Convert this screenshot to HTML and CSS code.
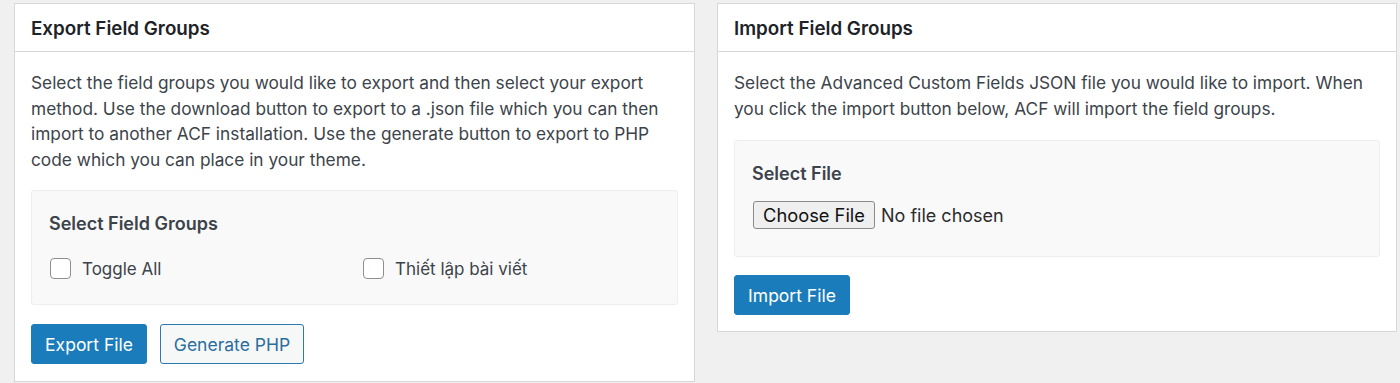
FILE: index.html
```html
<!DOCTYPE html>
<html lang="en">
<head>
<meta charset="utf-8">
<title>Tools</title>
<link rel="stylesheet" href="styles.css">
</head>
<body>
<div class="wrap">
  <section class="postbox export">
    <h2 class="hndle">Export Field Groups</h2>
    <div class="inside">
      <p class="desc">Select the field groups you would like to export and then select your export method. Use the download button to export to a .json file which you can then import to another ACF installation. Use the generate button to export to PHP code which you can place in your theme.</p>
      <div class="field">
        <div class="label">Select Field Groups</div>
        <ul class="checks">
          <li><label><input type="checkbox" class="cb"><span>Toggle All</span></label></li>
          <li><label><input type="checkbox" class="cb"><span>Thiết lập bài viết</span></label></li>
        </ul>
      </div>
      <div class="actions">
        <button class="btn primary">Export File</button>
        <button class="btn secondary">Generate PHP</button>
      </div>
    </div>
  </section>
  <section class="postbox import">
    <h2 class="hndle">Import Field Groups</h2>
    <div class="inside">
      <p class="desc">Select the Advanced Custom Fields JSON file you would like to import. When you click the import button below, ACF will import the field groups.</p>
      <div class="field file-field">
        <div class="label">Select File</div>
        <div class="file-row">
          <button class="choose">Choose File</button>
          <span class="nofile">No file chosen</span>
        </div>
      </div>
      <div class="actions">
        <button class="btn primary">Import File</button>
      </div>
    </div>
  </section>
</div>
</body>
</html>
```

FILE: styles.css
```css
html, body {
  margin: 0;
  padding: 0;
  background: #f0f0f1;
  font-family: Inter, "Liberation Sans", Arial, sans-serif;
  color: #3c434a;
}

.wrap {
  display: flex;
  align-items: flex-start;
  gap: 22px;
  padding: 3px 0 0 14px;
}

.postbox {
  background: #fff;
  border: 1px solid #d6d7d9;
  box-sizing: border-box;
}

.export { width: 681px; }
.import { width: 680px; }

.hndle {
  margin: 0;
  height: 48px;
  box-sizing: border-box;
  padding: 1px 16px 0 16px;
  display: flex;
  align-items: center;
  font-size: 18.8px;
  font-weight: 600;
  color: #1d2327;
  border-bottom: 1px solid #d6d7d9;
}

.inside {
  padding: 18px 16px 17px 16px;
}

.import .inside {
  padding-bottom: 16px;
}

.desc {
  margin: 0;
  font-size: 17.3px;
  line-height: 25.6px;
  color: #3c434a;
}

.field {
  margin-top: 18px;
  background: #f9f9f9;
  border: 1px solid #eeeeee;
  border-radius: 3px;
  padding: 22px 17px 0 17px;
  box-sizing: border-box;
}

.export .field { height: 115px; }
.file-field { height: 117px; margin-top: 19px; padding-top: 22px; }

.label {
  font-size: 18px;
  font-weight: 600;
  color: #3c434a;
  line-height: 22px;
}

.checks {
  list-style: none;
  margin: 23px 0 0 0;
  padding: 0;
  display: grid;
  grid-template-columns: 313px 1fr;
}

.checks label {
  display: flex;
  align-items: center;
  gap: 11px;
  font-size: 17px;
  color: #3c434a;
}

.cb {
  appearance: none;
  -webkit-appearance: none;
  margin: 0 0 0 1px;
  width: 21px;
  height: 21px;
  border: 1.5px solid #8c8f94;
  border-radius: 4px;
  background: #fff;
  box-sizing: border-box;
  flex: none;
}

.file-row {
  margin-top: 16px;
  display: flex;
  align-items: center;
  gap: 6px;
}

.choose {
  margin-left: 1px;
  height: 28px;
  width: 122px;
  padding: 0;
  font-family: Inter, "Liberation Sans", Arial, sans-serif;
  font-size: 18.3px;
  color: #111;
  background: #efefef;
  border: 1px solid #8a8a8a;
  border-radius: 3px;
}

.nofile {
  font-size: 18px;
  color: #2c2c2c;
}

.actions {
  margin-top: 19px;
  display: flex;
  gap: 13px;
}

.import .actions { margin-top: 18px; }

.btn {
  height: 40px;
  box-sizing: border-box;
  border-radius: 3px;
  font-family: Inter, "Liberation Sans", Arial, sans-serif;
  font-size: 17.5px;
  padding: 0;
}

.primary {
  background: #1b7cbb;
  border: 1px solid #1b7cbb;
  color: #fff;
  width: 116px;
}

.secondary {
  background: #f6f7f7;
  border: 1px solid #2a7ab0;
  color: #2a6e9e;
  width: 144px;
}
```
